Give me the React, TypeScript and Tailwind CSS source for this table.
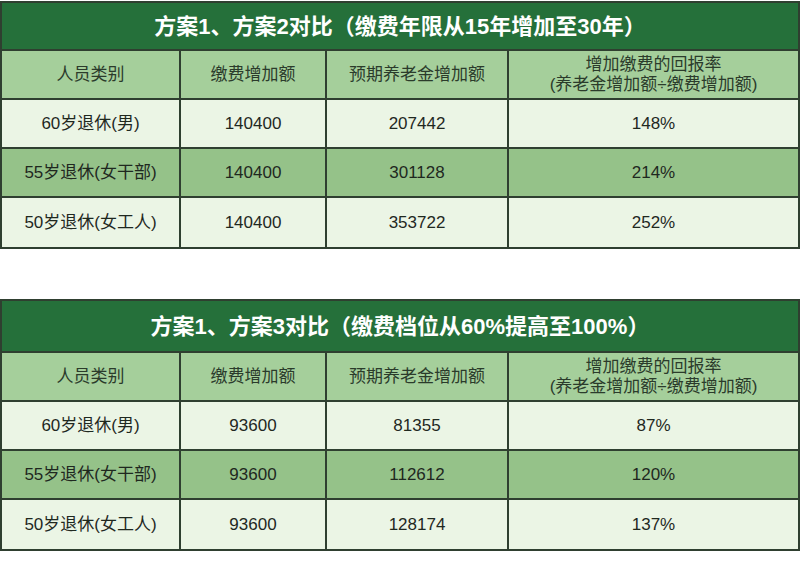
import React from 'react';

type Row = { who: string; pay: string; pension: string; rate: string };

const tables: { title: string; h: string; rows: Row[] }[] = [
  {
    title: '方案1、方案2对比（缴费年限从15年增加至30年）',
    h: 'h-[48px]',
    rows: [
      { who: '60岁退休(男)', pay: '140400', pension: '207442', rate: '148%' },
      { who: '55岁退休(女干部)', pay: '140400', pension: '301128', rate: '214%' },
      { who: '50岁退休(女工人)', pay: '140400', pension: '353722', rate: '252%' },
    ],
  },
  {
    title: '方案1、方案3对比（缴费档位从60%提高至100%）',
    h: 'h-[52px]',
    rows: [
      { who: '60岁退休(男)', pay: '93600', pension: '81355', rate: '87%' },
      { who: '55岁退休(女干部)', pay: '93600', pension: '112612', rate: '120%' },
      { who: '50岁退休(女工人)', pay: '93600', pension: '128174', rate: '137%' },
    ],
  },
];

const grid = 'grid grid-cols-[179px_146px_182px_1fr]';
const cell = 'flex items-center justify-center text-center border-r-2 border-[#2f3f30]';

const CompareTable = ({ title, h, rows }: { title: string; h: string; rows: Row[] }) => {
  return (
    <div className="border-2 border-[#2f3f30]">
      <div className={`${h} flex items-center justify-center bg-[#25703a] border-b-2 border-[#2f3f30] text-white text-[22px] font-bold`}>
        {title}
      </div>
      <div className={`${grid} h-[49px] bg-[#a5cf9b] border-b-2 border-[#2f3f30] text-[#2b3b2b] text-[17px]`}>
        <div className={cell}>人员类别</div>
        <div className={cell}>缴费增加额</div>
        <div className={cell}>预期养老金增加额</div>
        <div className="flex flex-col items-center justify-center text-center leading-[20px] text-[17px]">
          <span>增加缴费的回报率</span>
          <span>(养老金增加额÷缴费增加额)</span>
        </div>
      </div>
      {rows.map((r, i) => (
        <div
          key={i}
          className={`${grid} h-[49px] text-[17px] text-[#1f281f] ${i === 1 ? 'bg-[#95c289]' : 'bg-[#ebf5e5]'} ${
            i < rows.length - 1 ? 'border-b-2 border-[#2f3f30]' : ''
          }`}
        >
          <div className={cell}>{r.who}</div>
          <div className={cell}>{r.pay}</div>
          <div className={cell}>{r.pension}</div>
          <div className="flex items-center justify-center">{r.rate}</div>
        </div>
      ))}
    </div>
  );
};

export default function App() {
  return (
    <div
      className="w-[800px] h-[567px] bg-white pt-[1px] overflow-hidden"
      style={{ fontFamily: '"Liberation Sans", "Noto Sans CJK SC", sans-serif' }}
    >
      <CompareTable {...tables[0]} />
      <div className="mt-[50px]">
        <CompareTable {...tables[1]} />
      </div>
    </div>
  );
}
